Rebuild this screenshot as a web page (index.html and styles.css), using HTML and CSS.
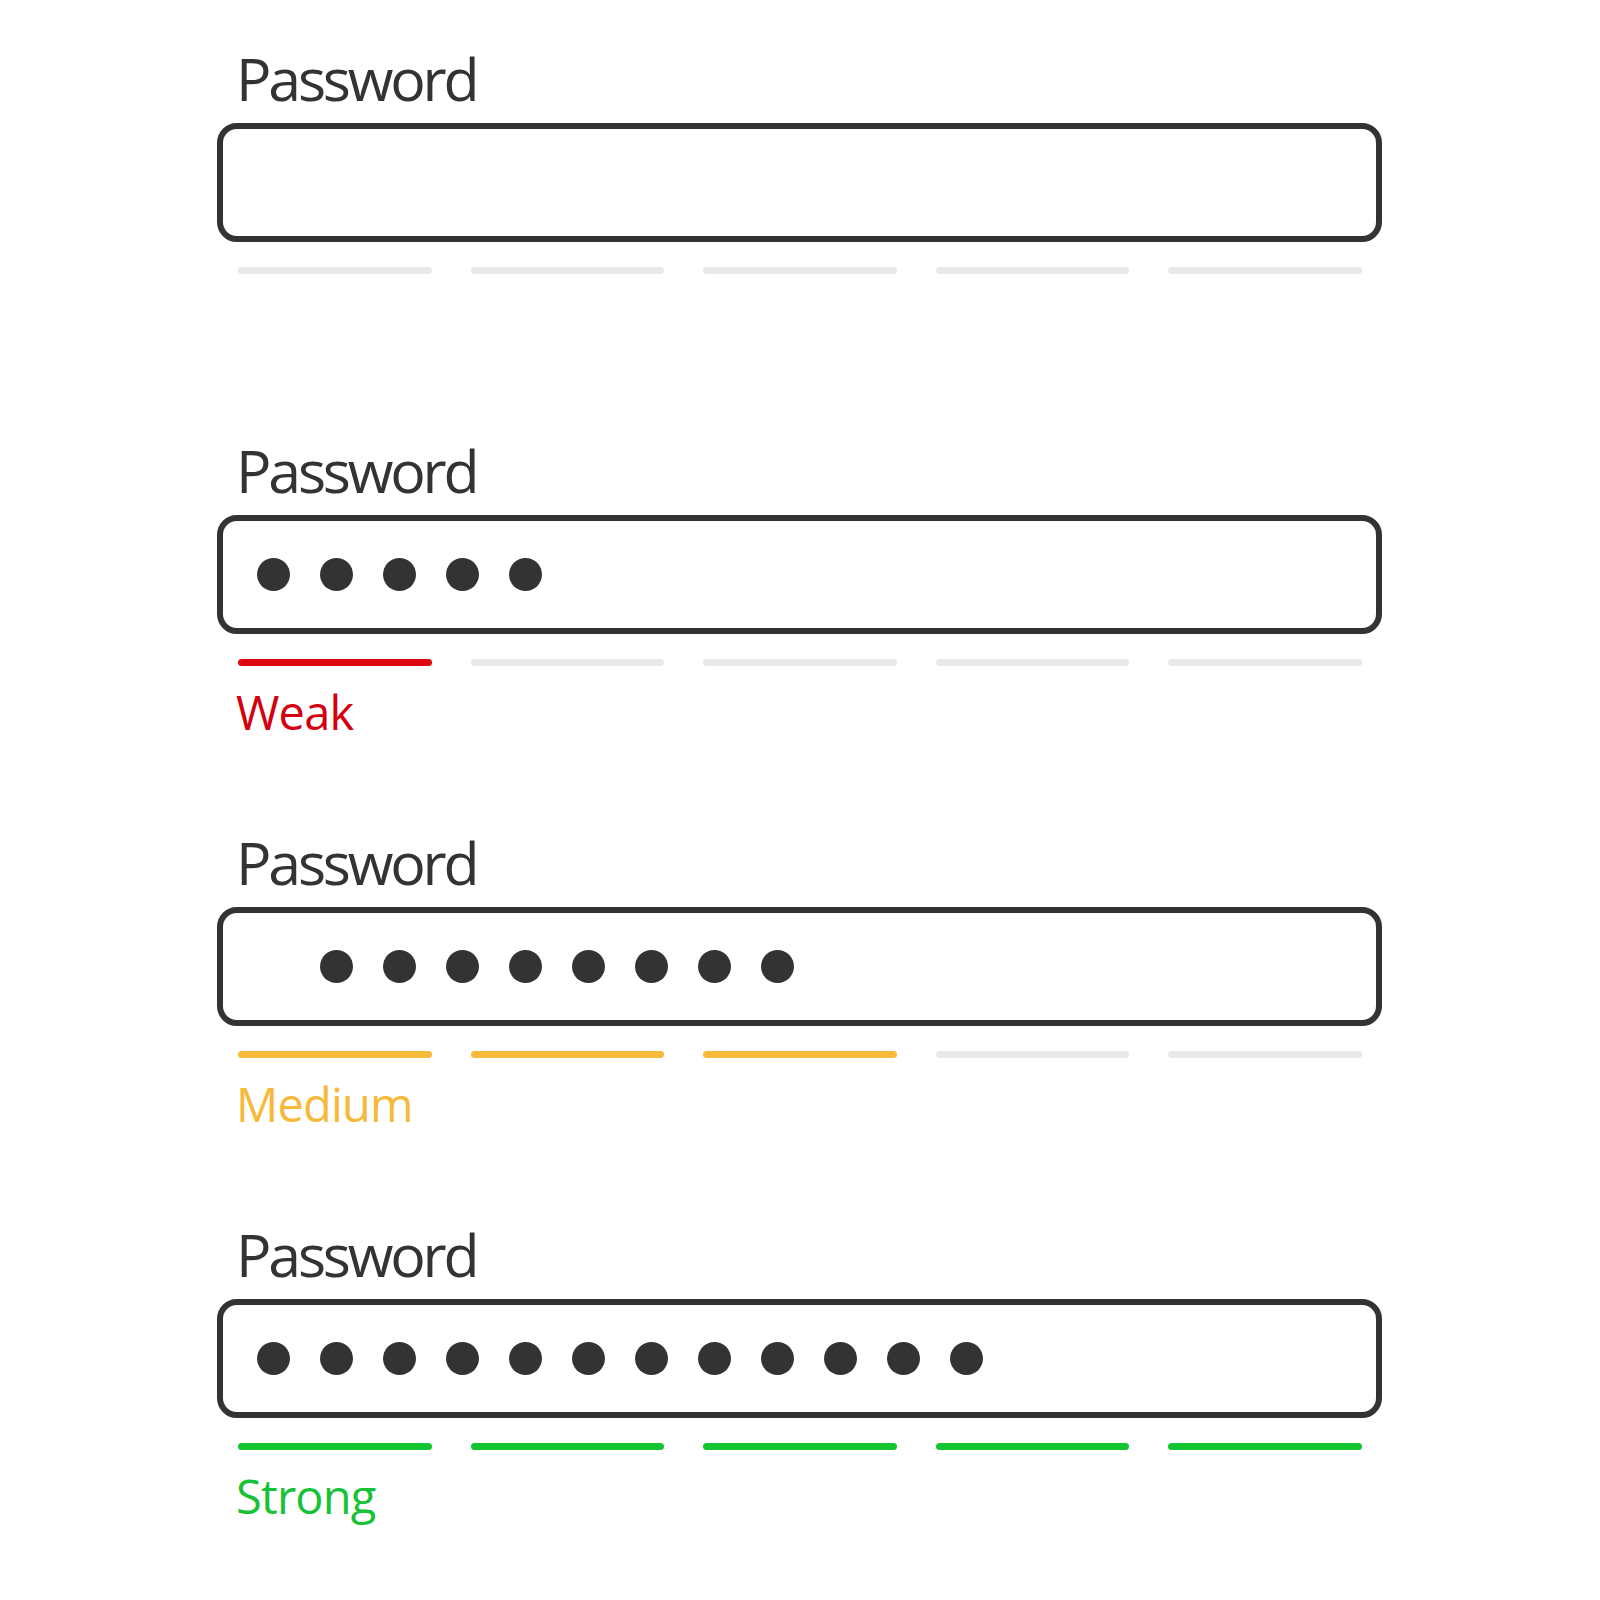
FILE: index.html
```html
<!DOCTYPE html>
<html lang="en">
<head>
<meta charset="utf-8">
<title>Password strength</title>
<link rel="stylesheet" href="styles.css">
</head>
<body>
<main class="page">
  <section class="field">
    <div class="label">Password</div>
    <div class="box"></div>
    <div class="meter">
      <span class="bar"></span><span class="bar"></span><span class="bar"></span><span class="bar"></span><span class="bar"></span>
    </div>
  </section>

  <section class="field">
    <div class="label">Password</div>
    <div class="box">
      <span class="dot"></span><span class="dot"></span><span class="dot"></span><span class="dot"></span><span class="dot"></span>
    </div>
    <div class="meter">
      <span class="bar weak"></span><span class="bar"></span><span class="bar"></span><span class="bar"></span><span class="bar"></span>
    </div>
    <div class="strength weak-text">Weak</div>
  </section>

  <section class="field">
    <div class="label">Password</div>
    <div class="box box-shift">
      <span class="dot"></span><span class="dot"></span><span class="dot"></span><span class="dot"></span><span class="dot"></span><span class="dot"></span><span class="dot"></span><span class="dot"></span>
    </div>
    <div class="meter">
      <span class="bar medium"></span><span class="bar medium"></span><span class="bar medium"></span><span class="bar"></span><span class="bar"></span>
    </div>
    <div class="strength medium-text">Medium</div>
  </section>

  <section class="field">
    <div class="label">Password</div>
    <div class="box">
      <span class="dot"></span><span class="dot"></span><span class="dot"></span><span class="dot"></span><span class="dot"></span><span class="dot"></span><span class="dot"></span><span class="dot"></span><span class="dot"></span><span class="dot"></span><span class="dot"></span><span class="dot"></span>
    </div>
    <div class="meter">
      <span class="bar strong"></span><span class="bar strong"></span><span class="bar strong"></span><span class="bar strong"></span><span class="bar strong"></span>
    </div>
    <div class="strength strong-text">Strong</div>
  </section>
</main>
</body>
</html>
```
FILE: styles.css
```css
html, body {
  margin: 0;
  padding: 0;
  background: #ffffff;
}

body {
  font-family: "Open Sans", "Noto Sans", "Liberation Sans", sans-serif;
  color: #333333;
}

.page {
  width: 1165px;
  margin-left: 217px;
  padding-top: 46px;
  display: grid;
  grid-auto-rows: 392px;
}

.field {
  display: flex;
  flex-direction: column;
}

.label {
  font-size: 59px;
  line-height: 64px;
  height: 64px;
  padding-left: 19px;
  letter-spacing: -3.2px;
  margin-bottom: 13px;
  color: #333333;
}

.box {
  box-sizing: border-box;
  height: 119px;
  border: 6px solid #333333;
  border-radius: 20px;
  display: flex;
  align-items: center;
  gap: 30px;
  padding-left: 34px;
}

.box-shift {
  padding-left: 97px;
}

.dot {
  width: 33px;
  height: 33px;
  border-radius: 50%;
  background: #333333;
  flex: none;
}

.meter {
  margin-top: 25px;
  padding: 0 20px 0 21px;
  display: grid;
  grid-template-columns: repeat(5, 1fr);
  column-gap: 39px;
}

.bar {
  height: 7px;
  border-radius: 4px;
  background: #e8e8e8;
}

.bar.weak { background: #dc0a10; }
.bar.medium { background: #f8ba3b; }
.bar.strong { background: #14c431; }

.strength {
  font-size: 47px;
  line-height: 56px;
  height: 56px;
  margin-top: 18px;
  padding-left: 19px;
  letter-spacing: -0.8px;
}

.weak-text { color: #d4000f; }
.medium-text { color: #f7b93a; }
.strong-text { color: #17c236; }
```
